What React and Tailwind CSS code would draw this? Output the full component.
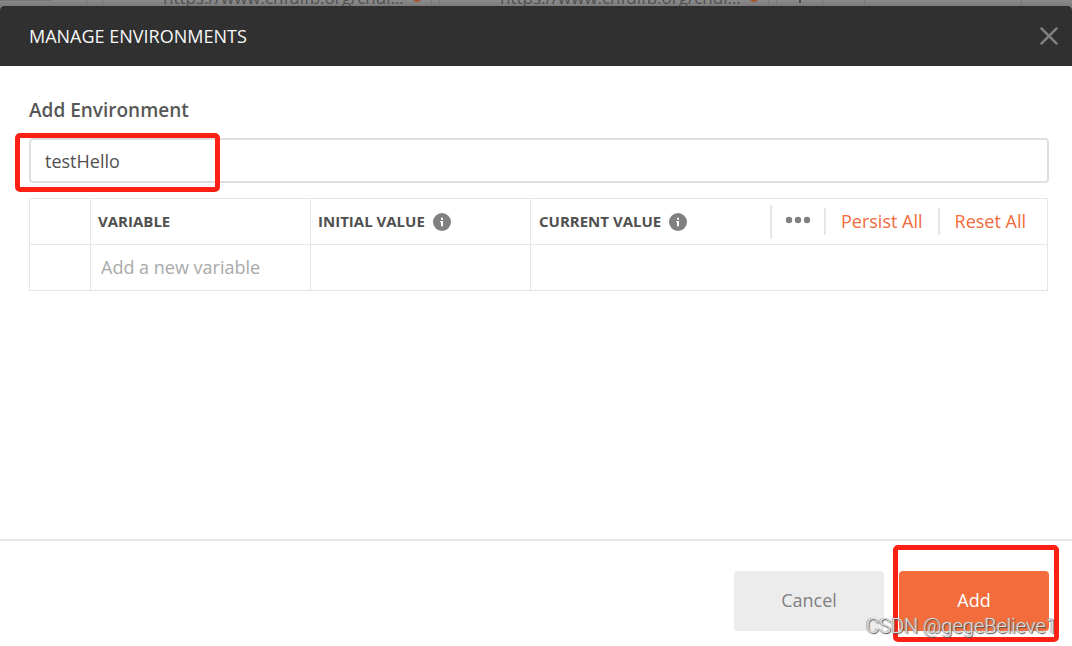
import React, { useState } from 'react';

function InfoIcon() {
  return (
    <svg viewBox="0 0 18 18" className="size-[18px] shrink-0" aria-hidden="true">
      <circle cx="9" cy="9" r="9" fill="#808080" />
      <path d="M8 4.8h2v2H8zM7.2 7.9H10v5.3H8V9.2h-.8z" fill="#fff" />
    </svg>
  );
}

function TabStrip() {
  return (
    <div className="flex h-[6px] overflow-hidden bg-gradient-to-b from-[#8b8b8b] to-[#7c7c7c] text-[17px] leading-[20px] text-[#505050]" aria-hidden="true">
      <div className="h-px w-[52px] shrink-0 bg-[#777777]" />
      <div className="w-[35px] shrink-0 border-r border-[#777777]" />
      <div className="w-[16px] shrink-0 border-r border-[#777777]" />
      <Tab />
      <div className="w-[8px] shrink-0 border-r border-[#777777]" />
      <Tab />
      <div className="w-[8px] shrink-0 border-r border-[#777777]" />
      <div className="flex w-[46px] shrink-0 justify-center border-r border-[#777777]">
        <div className="h-[3px] w-[2px] bg-[#4a4a4a]" />
      </div>
      <div className="w-[42px] shrink-0 border-r border-[#777777]" />
      <div className="w-[157px] shrink-0 border-r border-[#777777]" />
    </div>
  );
}

function Tab() {
  return (
    <div className="flex w-[329px] shrink-0 items-end border-r border-[#777777] pl-[60px]">
      <span className="-mb-[2px] w-[240px] shrink-0 whitespace-nowrap">https://www.chfdlfb.org/chdl...</span>
      <span className="mb-[4px] ml-[10px] size-[8px] shrink-0 rounded-full bg-[#a4532d]" />
    </div>
  );
}

export default function App() {
  const [name, setName] = useState('testHello');
  return (
    <div className="flex min-h-screen flex-col bg-[#7c7c7c] font-['Open_Sans','Noto_Sans',sans-serif] text-[18px] leading-[24px] text-[#505050]">
      <TabStrip />
      <section role="dialog" aria-labelledby="dialog-title" className="flex flex-1 flex-col rounded-t-[4px] bg-white">
        <header className="flex h-[60px] items-center justify-between rounded-t-[4px] bg-[#303030] pl-[29px] pr-[14px]">
          <h1 id="dialog-title" className="text-[#f8f8f8]">MANAGE ENVIRONMENTS</h1>
          <button type="button" aria-label="Close">
            <svg viewBox="0 0 18 18" className="size-[18px]" fill="none" stroke="#808080" strokeWidth="2.6">
              <path d="M.8.8l16.4 16.4M17.2.8L.8 17.2" />
            </svg>
          </button>
        </header>

        <main className="flex-1 pl-[29px] pr-[23px] pt-[30px]">
          <label htmlFor="environment-name" className="block text-[19px] leading-[28px] font-semibold text-[#585858]">Add Environment</label>
          <div className="relative mt-[14px]">
            <input
              id="environment-name"
              value={name}
              onChange={(e) => setName(e.target.value)}
              className="block h-[45px] w-full rounded-[4px] border-2 border-[#dfdfdf] bg-white px-[14px] outline-none"
            />
            <div className="pointer-events-none absolute -left-[14px] -top-[5px] h-[59px] w-[205px] rounded-[5px] border-5 border-[#ff2015]" />
          </div>

          <div className="pr-px">
            <table className="mt-[15px] w-full table-fixed border-collapse text-left [&_td]:border [&_td]:border-[#e6e6e6] [&_th]:border [&_th]:border-[#e6e6e6]">
              <colgroup>
                <col className="w-[61px]" />
                <col className="w-[220px]" />
                <col className="w-[220px]" />
                <col />
              </colgroup>
              <thead className="text-[15px]">
                <tr className="h-[46px]">
                  <th aria-label="Enabled" />
                  <th className="px-[7px] pb-[2px] font-bold">VARIABLE</th>
                  <th className="px-[7px] font-bold">
                    <div className="flex items-center gap-[8px]"><span className="pb-[2px]">INITIAL VALUE</span> <InfoIcon /></div>
                  </th>
                  <th className="pl-[8px] font-bold">
                    <div className="flex items-center justify-between">
                      <div className="flex items-center gap-[8px]"><span className="pb-[2px]">CURRENT VALUE</span> <InfoIcon /></div>
                      <div className="flex items-center text-[18px] font-normal text-[#f26b3a]">
                        <button type="button" aria-label="More actions" className="flex h-[34px] items-center border-l-2 border-[#e6e6e6] px-[13px]">
                          <svg viewBox="0 0 26 8" className="mb-[4px] h-[8px] w-[26px]" fill="#808080">
                            <circle cx="4" cy="4" r="3.2" />
                            <circle cx="13" cy="4" r="3.2" />
                            <circle cx="22" cy="4" r="3.2" />
                          </svg>
                        </button>
                        <button type="button" className="h-[27px] border-l-2 border-[#e6e6e6] px-[15px] pb-[2px]">Persist All</button>
                        <button type="button" className="h-[27px] border-l-2 border-[#e6e6e6] pl-[15px] pr-[21px] pb-[2px]">Reset All</button>
                      </div>
                    </div>
                  </th>
                </tr>
              </thead>
              <tbody>
                <tr className="h-[46px]">
                  <td />
                  <td className="px-[10px] pb-[2px]">
                    <input aria-label="Variable" placeholder="Add a new variable" className="block w-full bg-transparent outline-none placeholder:text-[#a9a9a9]" />
                  </td>
                  <td />
                  <td />
                </tr>
              </tbody>
            </table>
          </div>
        </main>

        <footer className="flex justify-end gap-[15px] border-t-2 border-[#e6e6e6] pb-[15px] pr-[23px] pt-[30px]">
          <button type="button" className="h-[60px] w-[150px] rounded-[4px] bg-[#ececec] pb-[2px] text-[#808080]">Cancel</button>
          <div className="relative">
            <button type="button" className="h-[60px] w-[150px] rounded-[4px] bg-[#f36d3c] pb-[2px] text-white">Add</button>
            <div className="pointer-events-none absolute -bottom-[11px] -left-[6px] -right-[10px] -top-[26px] rounded-[5px] border-5 border-[#ff2015]" />
            <span className="pointer-events-none absolute -bottom-[7px] -right-[8px] whitespace-nowrap font-['Roboto','Liberation_Sans',sans-serif] text-[20px] font-light text-[#e2dcda] [text-shadow:1px_1px_1px_#505050,-1px_0_1px_#a0a0a0]">CSDN @gegeBelieve1</span>
          </div>
        </footer>
      </section>
    </div>
  );
}
